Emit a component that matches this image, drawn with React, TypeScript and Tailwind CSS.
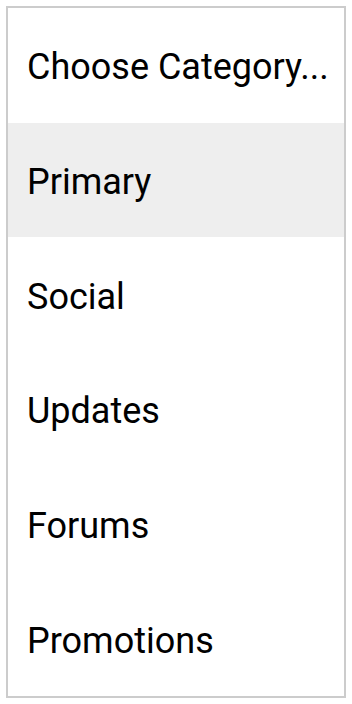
const categories = ["Choose Category...", "Primary", "Social", "Updates", "Forums", "Promotions"];

export default function App() {
  return (
    <div className="min-h-[704px] w-[352px] bg-white p-[6px] font-['Roboto',sans-serif]">
      <ul className="flex flex-col border-2 border-[#cccccc] bg-white">
        {categories.map((c, i) => (
          <li
            key={c}
            className={
              "flex h-[114.67px] items-center pl-[19px] pt-1 text-[36px] text-black " +
              (i === 1 ? "bg-[#eeeeee]" : "")
            }
          >
            {c}
          </li>
        ))}
      </ul>
    </div>
  );
}
